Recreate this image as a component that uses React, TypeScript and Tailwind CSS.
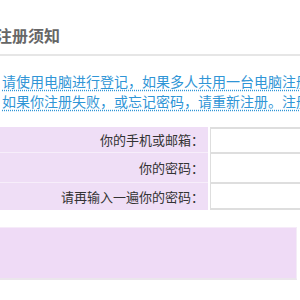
import React from "react";

const font = { fontFamily: '"Noto Sans CJK SC", "Noto Sans", sans-serif' };

function Row({ label, h, first, last }: { label: string; h: string; first?: boolean; last?: boolean }) {
  return (
    <div className={`flex ${h}`}>
      <div
        className={`w-[208px] shrink-0 bg-[#efdef6] flex items-center justify-end pr-[4px] text-[13px] text-[#333] ${
          first ? "" : "border-t border-[#f7eefa]"
        }`}
      >
        {label}
      </div>
      <div className="w-[2px] shrink-0" />
      <div
        className={`flex-1 bg-white border-t-2 border-l border-[#dedede] ${last ? "border-b-2" : ""}`}
      />
    </div>
  );
}

export default function App() {
  return (
    <div className="w-[300px] h-[300px] bg-white overflow-hidden" style={font}>
      <div className="h-[56px] border-b-2 border-[#e6e6e6] pt-[26px]">
        <div className="ml-[-4px] text-[16px] leading-[18px] font-bold text-[#666] whitespace-nowrap">
          注册须知
        </div>
      </div>
      <div className="mt-[15px] pl-[2px] text-[14px] leading-[20px] text-[#2f95d6] whitespace-nowrap">
        <div className="underline decoration-dotted underline-offset-[3px]">
          请使用电脑进行登记，如果多人共用一台电脑注册，请在注册后退出登录。
        </div>
        <div className="underline decoration-dotted underline-offset-[3px]">
          如果你注册失败，或忘记密码，请重新注册。注册成功后请牢记您的密码。
        </div>
      </div>
      <div className="mt-[16px]">
        <Row label="你的手机或邮箱：" h="h-[25px]" first />
        <Row label="你的密码：" h="h-[30px]" />
        <Row label="请再输入一遍你的密码：" h="h-[28px]" last />
      </div>
      <div className="mt-[17px] w-[297px] h-[53px] bg-[#efdbf6] border-t border-[#f6ebf9] border-r border-r-[#f4ecf7] border-b-2 border-b-[#ebe6ec]" />
    </div>
  );
}
